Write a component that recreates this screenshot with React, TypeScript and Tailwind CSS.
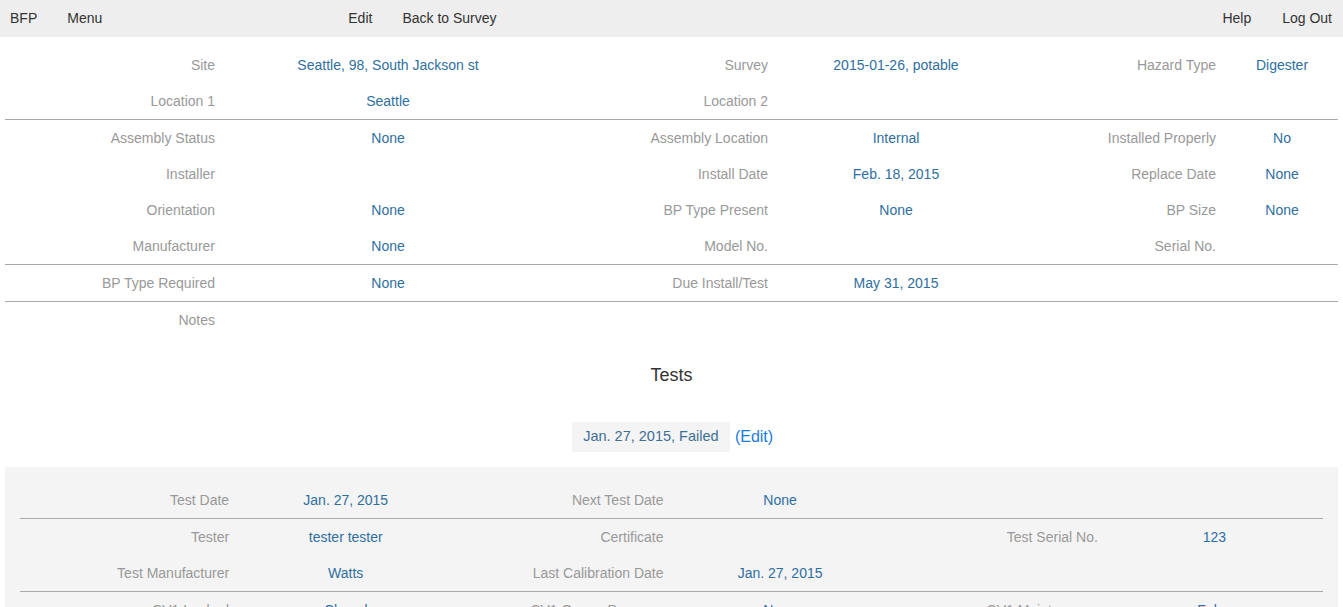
import React from 'react';

type Cell = { label: string; value?: string };

const font = { fontFamily: '"Liberation Sans", Arial, sans-serif' };

const infoRows: Cell[][][] = [
    [
        [
            { label: 'Site', value: 'Seattle, 98, South Jackson st' },
            { label: 'Survey', value: '2015-01-26, potable' },
            { label: 'Hazard Type', value: 'Digester' },
        ],
        [{ label: 'Location 1', value: 'Seattle' }, { label: 'Location 2' }],
    ],
    [
        [
            { label: 'Assembly Status', value: 'None' },
            { label: 'Assembly Location', value: 'Internal' },
            { label: 'Installed Properly', value: 'No' },
        ],
        [
            { label: 'Installer' },
            { label: 'Install Date', value: 'Feb. 18, 2015' },
            { label: 'Replace Date', value: 'None' },
        ],
        [
            { label: 'Orientation', value: 'None' },
            { label: 'BP Type Present', value: 'None' },
            { label: 'BP Size', value: 'None' },
        ],
        [{ label: 'Manufacturer', value: 'None' }, { label: 'Model No.' }, { label: 'Serial No.' }],
    ],
    [[{ label: 'BP Type Required', value: 'None' }, { label: 'Due Install/Test', value: 'May 31, 2015' }]],
    [[{ label: 'Notes' }]],
];

const testRows: Cell[][][] = [
    [[{ label: 'Test Date', value: 'Jan. 27, 2015' }, { label: 'Next Test Date', value: 'None' }]],
    [
        [{ label: 'Tester', value: 'tester tester' }, { label: 'Certificate' }, { label: 'Test Serial No.', value: '123' }],
        [{ label: 'Test Manufacturer', value: 'Watts' }, { label: 'Last Calibration Date', value: 'Jan. 27, 2015' }],
    ],
    [
        [
            { label: 'CV1 Leaked', value: 'Closed' },
            { label: 'CV1 Gauge Pressure', value: 'None' },
            { label: 'CV1 Maintenance', value: 'False' },
        ],
    ],
];

const Row: React.FC<{ cells: Cell[]; grid: string; labelPad: string }> = ({ cells, grid, labelPad }) => (
    <div className={`grid ${grid} h-[36px] items-center text-[14px]`}>
        {[0, 1, 2].map((i) => (
            <React.Fragment key={i}>
                <div className={`text-right text-[#999] ${labelPad}`}>{cells[i]?.label}</div>
                <div className="text-center text-[#2f6f9f]">{cells[i]?.value}</div>
            </React.Fragment>
        ))}
    </div>
);

const Groups: React.FC<{ groups: Cell[][][]; grid: string; labelPad: string }> = ({ groups, grid, labelPad }) => (
    <div>
        {groups.map((rows, g) => (
            <div key={g} className={g > 0 ? 'border-t border-[#aaa]' : ''}>
                {rows.map((cells, r) => (
                    <Row key={r} cells={cells} grid={grid} labelPad={labelPad} />
                ))}
            </div>
        ))}
    </div>
);

const App: React.FC = () => {
    return (
        <div className="min-h-screen bg-white text-[#333]" style={font}>
            {/* Navbar */}
            <nav className="h-[37px] bg-[#eeeeee] flex items-center text-[14px] text-[#333]">
                <span className="ml-[10px]">BFP</span>
                <span className="ml-[30px]">Menu</span>
                <span className="ml-[246px]">Edit</span>
                <span className="ml-[30px]">Back to Survey</span>
                <span className="ml-auto">Help</span>
                <span className="ml-[31px] mr-[11px]">Log Out</span>
            </nav>

            <div className="mx-[5px] pt-[10px]">
                <Groups groups={infoRows} grid="grid-cols-[220px_326px_227px_236px_212px_112px]" labelPad="pr-[10px]" />
            </div>

            <h3 className="mt-[25px] text-center text-[18px] leading-[24px] text-[#333]">Tests</h3>

            <div className="mt-[35px] flex justify-center items-center">
                <div className="ml-[2px] h-[30px] w-[158px] bg-[#f4f4f4] flex items-center justify-center text-[14.5px] text-[#3d6f94]">
                    Jan. 27, 2015, Failed
                </div>
                <span className="ml-[5px] text-[16px] text-[#1a7be0]">(Edit)</span>
            </div>

            <div className="mx-[5px] mt-[15px] bg-[#f4f4f4] px-[15px] pt-[15px] pb-[15px]">
                <Groups groups={testRows} grid="grid-cols-6" labelPad="pr-[8px]" />
            </div>
        </div>
    );
};

export default App;
